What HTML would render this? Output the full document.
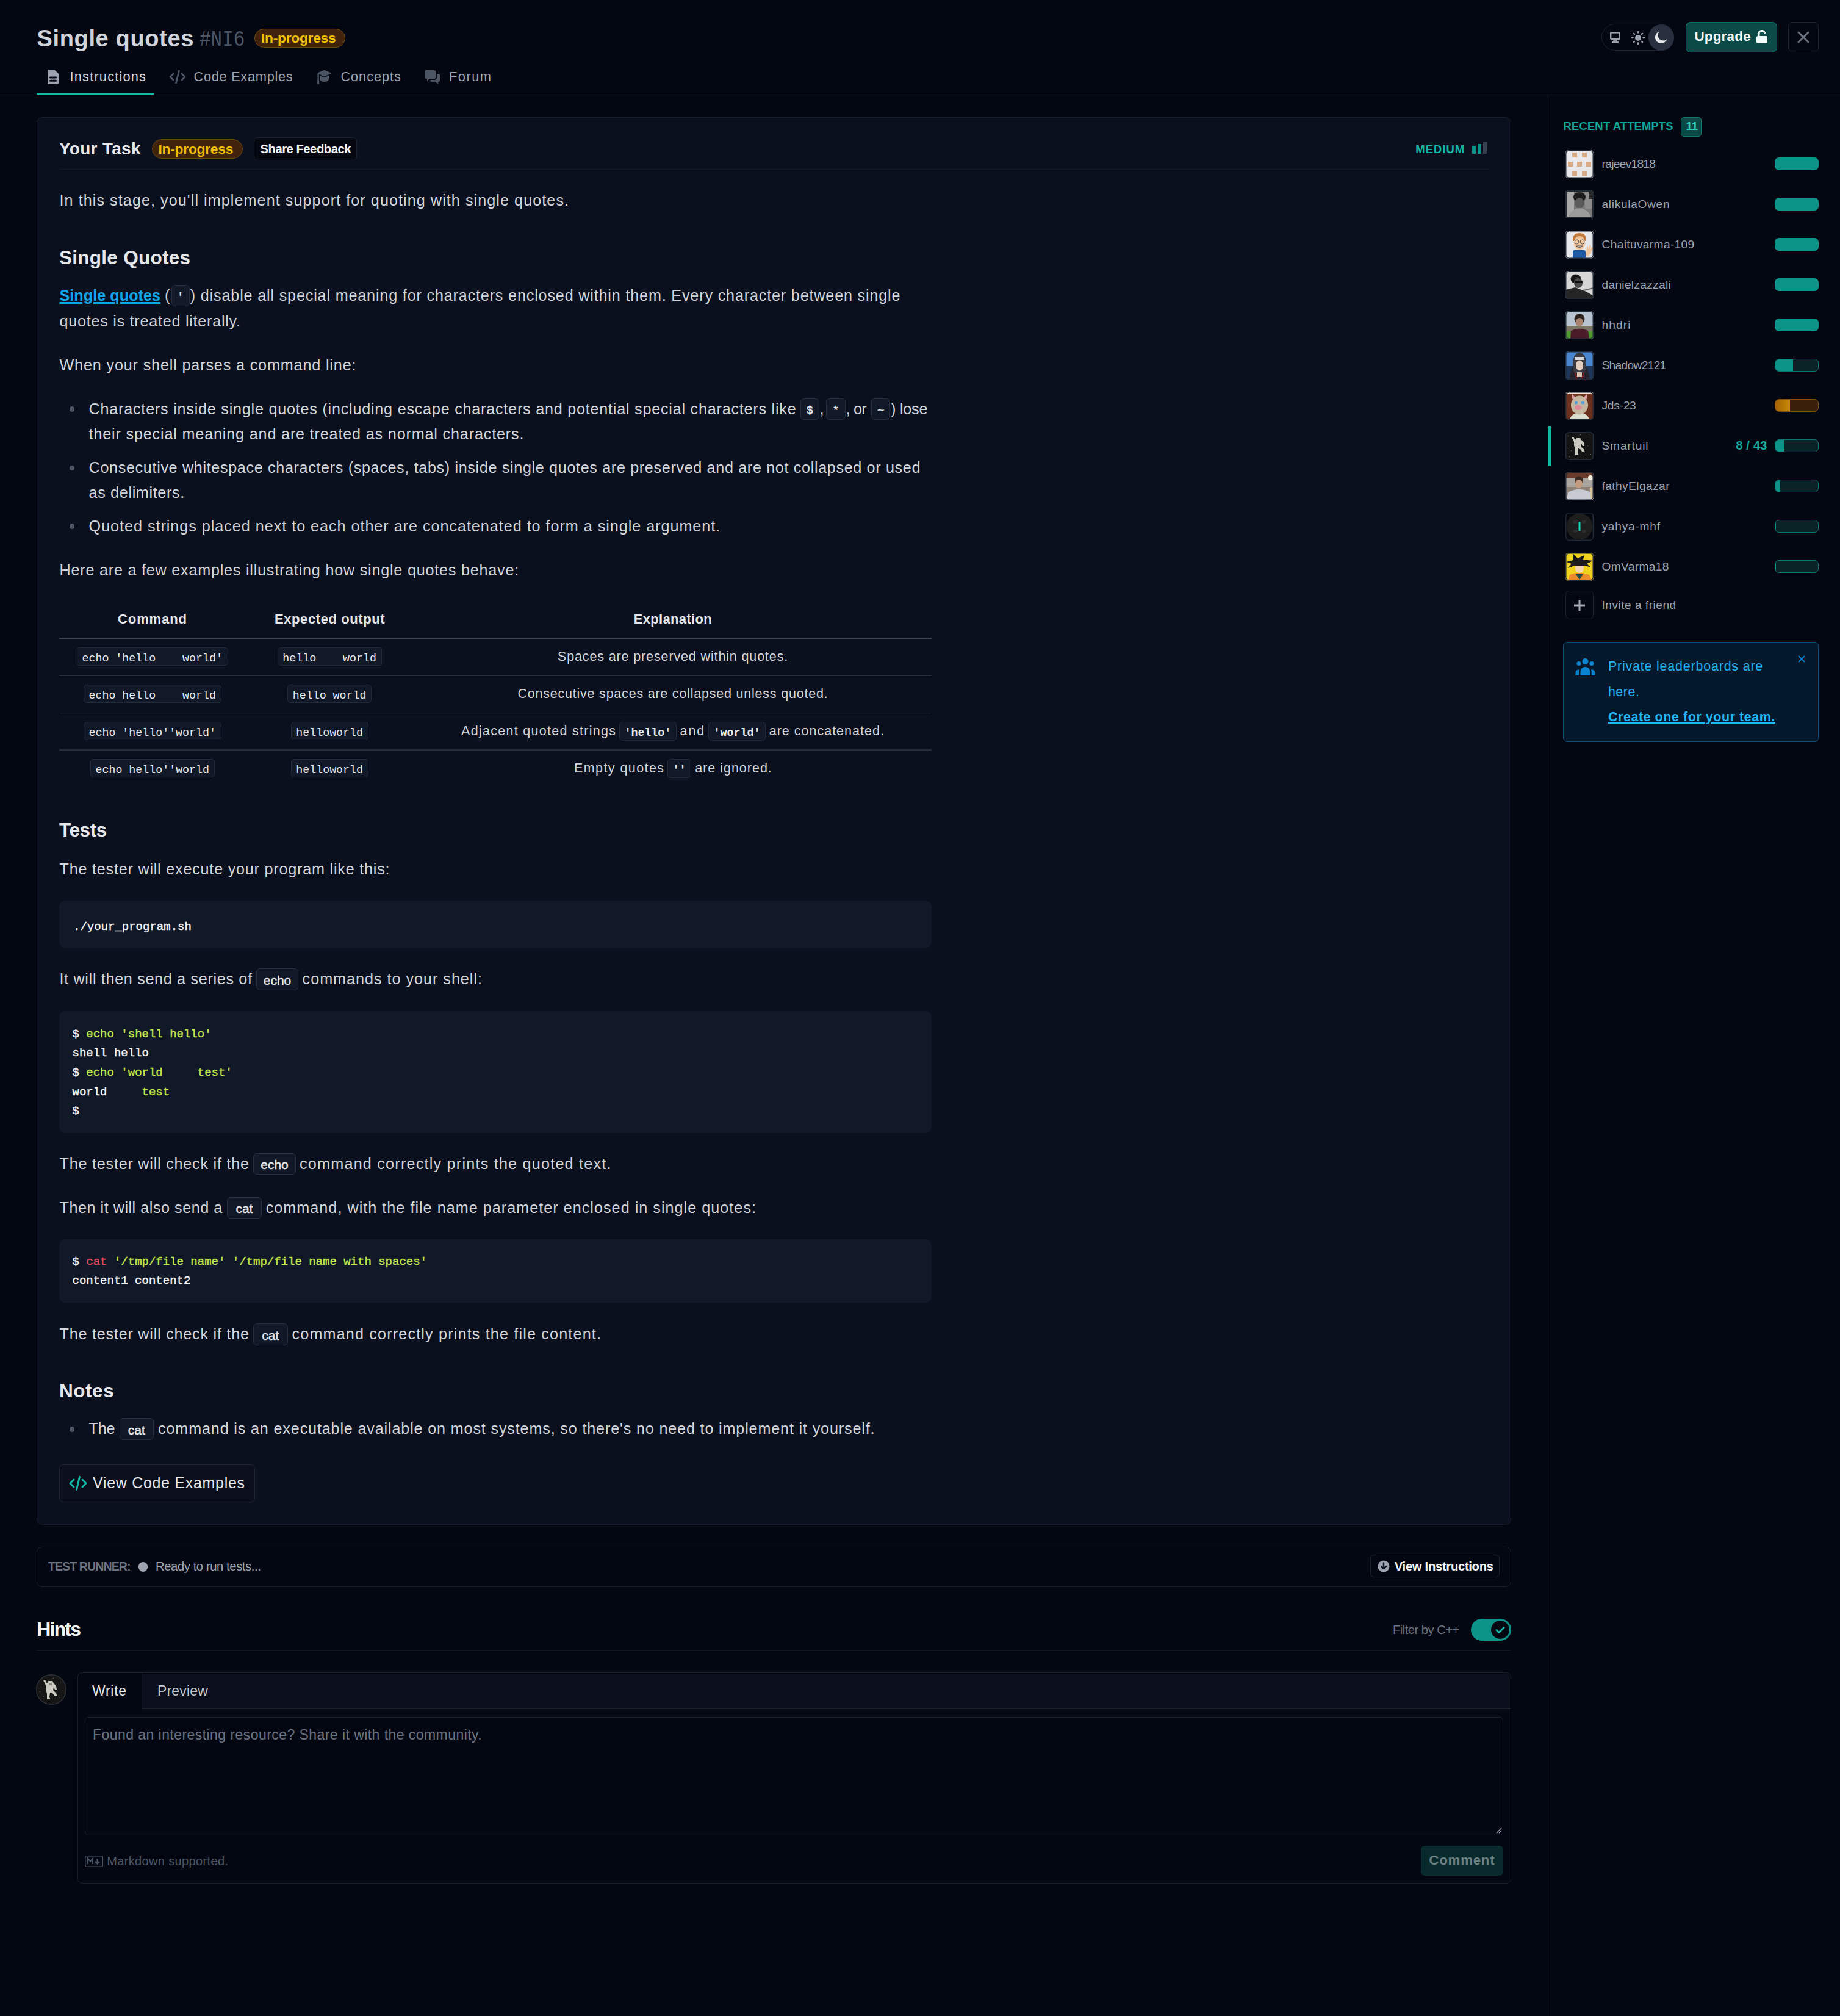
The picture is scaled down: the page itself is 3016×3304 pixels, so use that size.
<!DOCTYPE html>
<html><head><meta charset="utf-8"><title>Single quotes</title>
<style>
html,body{margin:0;padding:0;background:#030712;}
#pg{position:relative;width:3016px;height:3304px;overflow:hidden;background:#030712;font-family:"Liberation Sans", sans-serif;}
@media (max-width:1700px){#pg{zoom:0.5;}}
.t{position:absolute;white-space:pre;line-height:1;}
.s{font-family:"Liberation Sans", sans-serif;}
.m{font-family:"Liberation Mono", monospace;}
.cb{-webkit-text-stroke:0.45px currentColor;}
.b{position:absolute;box-sizing:border-box;}
.ic{font-family:"Liberation Sans", sans-serif;font-weight:700;font-size:20.5px;letter-spacing:0;color:#e5e7eb;background:#111827;border:1.5px solid #262e3b;border-radius:6px;padding:6px 9px 5px;}
.lk{color:#0ea5e9;font-weight:700;text-decoration:underline;text-decoration-thickness:2.6px;text-underline-offset:2px;}
</style></head><body><div id="pg">
<div id="title" class="t s" style="left:60.5px;top:43.8px;font-size:38px;color:#d1d5db;font-weight:700;letter-spacing:0.646px;">Single quotes</div>
<div class="t m" style="left:326.5px;top:48.4px;font-size:36px;color:#4b5563;transform:scaleX(0.86);transform-origin:0 0;">#NI6</div>
<div class="b" style="left:416.8px;top:46.8px;width:149.7px;height:31.6px;border-radius:17px;background:#40230a;border:1.5px solid #6e4a10;"></div>
<div id="hbadge" class="t s" style="left:428.0px;top:51.3px;font-size:22.8px;color:#f0c000;font-weight:700;letter-spacing:-0.272px;">In-progress</div>
<div class="b" style="left:59.8px;top:151.5px;width:192.2px;height:4.0px;background:#14b8a6;"></div>
<div id="tab1" class="t s" style="left:114.6px;top:114.7px;font-size:21.8px;color:#d1d5db;font-weight:400;letter-spacing:1.176px;">Instructions</div>
<div id="tab2" class="t s" style="left:317.5px;top:114.7px;font-size:21.8px;color:#9ca3af;font-weight:400;letter-spacing:0.694px;">Code Examples</div>
<div id="tab3" class="t s" style="left:558.4px;top:114.7px;font-size:21.8px;color:#9ca3af;font-weight:400;letter-spacing:0.931px;">Concepts</div>
<div id="tab4" class="t s" style="left:735.9px;top:114.7px;font-size:21.8px;color:#9ca3af;font-weight:400;letter-spacing:1.531px;">Forum</div>
<svg class="b" style="left:78px;top:114px" width="18" height="24" viewBox="0 0 18 24"><path d="M2.5 0h8.5l7 7v14.5a2.5 2.5 0 0 1-2.5 2.5h-13A2.5 2.5 0 0 1 0 21.5v-19A2.5 2.5 0 0 1 2.5 0z" fill="#9ca3af"/><rect x="3" y="11.5" width="12" height="3" rx="1.5" fill="#030712"/><rect x="3" y="16.8" width="12" height="3" rx="1.5" fill="#030712"/></svg>
<svg class="b" style="left:277px;top:114px" width="28" height="24" viewBox="0 0 28 24"><path d="M7 7l-5 5 5 5M21 7l5 5-5 5" stroke="#4b5563" stroke-width="2.8" fill="none" stroke-linecap="round" stroke-linejoin="round"/><path d="M16.5 2l-5 20" stroke="#4b5563" stroke-width="2.8" stroke-linecap="round"/></svg>
<svg class="b" style="left:518.5px;top:113.5px" width="25" height="25" viewBox="0 0 25 25"><path d="M12.5 0.5L0.5 6 12.5 11.5 24.5 6z" fill="#4b5563"/><path d="M5 9.5v6c0 2.6 3.4 4.6 7.5 4.6s7.5-2 7.5-4.6v-6l-7.5 3.5z" fill="#4b5563"/><path d="M2.6 7v11" stroke="#4b5563" stroke-width="2.4"/><rect x="1.2" y="17" width="3" height="7" rx="1" fill="#4b5563"/></svg>
<svg class="b" style="left:696px;top:114.5px" width="25" height="24" viewBox="0 0 25 24"><path d="M0 2.5A2.5 2.5 0 0 1 2.5 0h13A2.5 2.5 0 0 1 18 2.5v9a2.5 2.5 0 0 1-2.5 2.5H8l-4 4v-4H2.5A2.5 2.5 0 0 1 0 11.5z" fill="#4b5563"/><path d="M20 6h2.5A2.5 2.5 0 0 1 25 8.5v8a2.5 2.5 0 0 1-2.5 2.5H22v4l-4-4h-6a2.5 2.5 0 0 1-2.5-2.5V16h6.5a4 4 0 0 0 4-4z" fill="#4b5563"/></svg>
<div class="b" style="left:0.0px;top:154.5px;width:3016.0px;height:1.5px;background:#0f1520;"></div>
<div class="b" style="left:2625.3px;top:39.0px;width:118.2px;height:43.7px;border-radius:22px;border:1.5px solid #1a2130;background:#030712;"></div>
<div class="b" style="left:2701.6px;top:39.5px;width:42.6px;height:43.0px;border-radius:50%;background:#283040;"></div>
<svg class="b" style="left:2638.5px;top:52px" width="17" height="19" viewBox="0 0 17 19"><rect x="0" y="0" width="17" height="13" rx="2" fill="#9ca3af"/><rect x="2.4" y="2.6" width="12.2" height="7.6" fill="#030712"/><rect x="5.5" y="13" width="6" height="3" fill="#9ca3af"/><rect x="3" y="16" width="11" height="3" rx="1.2" fill="#9ca3af"/></svg>
<svg class="b" style="left:2674px;top:51px" width="22" height="22" viewBox="0 0 22 22"><circle cx="11" cy="11" r="5" fill="#9ca3af"/><g stroke="#9ca3af" stroke-width="2.4" stroke-linecap="round"><path d="M11 1v1.5M11 19.5V21M1 11h1.5M19.5 11H21M3.9 3.9l1 1M17.1 17.1l1 1M3.9 18.1l1-1M17.1 4.9l1-1"/></g></svg>
<svg class="b" style="left:2711px;top:50px" width="23" height="23" viewBox="0 0 23 23"><path d="M9 1.5A10 10 0 1 0 21.5 14 8 8 0 0 1 9 1.5z" fill="#e5e7eb"/></svg>
<div class="b" style="left:2763.0px;top:35.9px;width:149.7px;height:49.8px;border-radius:8px;background:#0b4a46;border:1.5px solid #0f766e;"></div>
<div id="upg" class="t s" style="left:2777.4px;top:49.3px;font-size:22.4px;color:#f9fafb;font-weight:700;letter-spacing:0.228px;">Upgrade</div>
<svg class="b" style="left:2878px;top:49px" width="20" height="23" viewBox="0 0 20 23"><path d="M5 10V6.5a5 5 0 0 1 9.6-2" stroke="#f0fdfa" stroke-width="3" fill="none" stroke-linecap="round"/><rect x="1" y="10" width="18" height="12" rx="2.5" fill="#f0fdfa"/></svg>
<div class="b" style="left:2931.1px;top:35.9px;width:49.8px;height:49.8px;border-radius:8px;border:1.5px solid #1a2130;"></div>
<svg class="b" style="left:2945px;top:50px" width="22" height="22" viewBox="0 0 22 22"><path d="M3 3l16 16M19 3L3 19" stroke="#6b7280" stroke-width="3" stroke-linecap="round"/></svg>
<div class="b" style="left:2536.8px;top:156.0px;width:1.4px;height:3148.0px;background:#0f1520;"></div>
<div id="ra" class="t s" style="left:2562.6px;top:198.3px;font-size:18.5px;color:#14a89a;font-weight:700;letter-spacing:0.083px;">RECENT ATTEMPTS</div>
<div class="b" style="left:2755.0px;top:192.3px;width:34.0px;height:31.3px;border-radius:5px;background:#0b4744;border:1.5px solid #0f766e;"></div>
<div id="ra11" class="t s" style="left:2763.5px;top:198.3px;font-size:18.5px;color:#2dd4bf;font-weight:700;letter-spacing:0.000px;">11</div>
<svg class="b" style="left:2566px;top:246px" width="46" height="46" viewBox="0 0 46 46"><defs><clipPath id="av0"><rect width="46" height="46" rx="5"/></clipPath></defs><g clip-path="url(#av0)"><rect width="46" height="46" fill="#e8e8ea"/><rect x="11" y="4" width="8" height="8" fill="#d8aa86"/><rect x="27" y="4" width="8" height="8" fill="#d8aa86"/><rect x="4" y="19" width="8" height="8" fill="#d8aa86"/><rect x="19" y="19" width="8" height="8" fill="#d8aa86"/><rect x="34" y="19" width="8" height="8" fill="#d8aa86"/><rect x="11" y="34" width="8" height="8" fill="#d8aa86"/><rect x="27" y="34" width="8" height="8" fill="#d8aa86"/></g><rect x="0.75" y="0.75" width="44.5" height="44.5" rx="5" fill="none" stroke="#1f2937" stroke-width="1.5"/></svg>
<div id="nm0" class="t s" style="left:2625.5px;top:258.7px;font-size:19.2px;color:#9ca3af;font-weight:400;letter-spacing:-0.716px;">rajeev1818</div>
<div class="b" style="left:2909.0px;top:258.0px;width:72.0px;height:21.0px;border-radius:7px;background:#0d9488;"></div>
<svg class="b" style="left:2566px;top:312px" width="46" height="46" viewBox="0 0 46 46"><defs><clipPath id="av1"><rect width="46" height="46" rx="5"/></clipPath></defs><g clip-path="url(#av1)"><rect width="46" height="46" fill="#7a7a7a"/><rect width="14" height="46" fill="#a8a8a8"/><rect x="32" width="14" height="30" fill="#8c8c8c"/><rect x="38" width="8" height="14" fill="#2a2a2a"/><ellipse cx="23" cy="11" rx="10" ry="8" fill="#1c1c1c"/><ellipse cx="23" cy="21" rx="7.5" ry="9" fill="#5a5a5a"/><path d="M5 46 Q7 31 23 29 Q39 31 42 46z" fill="#9c9c9c"/><rect x="1" y="1" width="44" height="44" fill="none" stroke="#2a2a2a" stroke-width="2"/></g><rect x="0.75" y="0.75" width="44.5" height="44.5" rx="5" fill="none" stroke="#1f2937" stroke-width="1.5"/></svg>
<div id="nm1" class="t s" style="left:2625.5px;top:324.7px;font-size:19.2px;color:#9ca3af;font-weight:400;letter-spacing:0.657px;">alikulaOwen</div>
<div class="b" style="left:2909.0px;top:324.0px;width:72.0px;height:21.0px;border-radius:7px;background:#0d9488;"></div>
<svg class="b" style="left:2566px;top:378px" width="46" height="46" viewBox="0 0 46 46"><defs><clipPath id="av2"><rect width="46" height="46" rx="5"/></clipPath></defs><g clip-path="url(#av2)"><rect width="46" height="46" fill="#e6e7ea"/><path d="M12 15 Q12 4 23 4 Q34 4 34 15 L34 17 L12 17z" fill="#c17a3c"/><ellipse cx="23" cy="20" rx="9.5" ry="11" fill="#efc39b"/><circle cx="18.5" cy="18.5" r="3.5" fill="none" stroke="#555" stroke-width="1"/><circle cx="27.5" cy="18.5" r="3.5" fill="none" stroke="#555" stroke-width="1"/><path d="M18 25 Q23 30 28 25z" fill="#fff" stroke="#333" stroke-width="0.8"/><rect x="12" y="32" width="21" height="14" rx="3" fill="#1f5aa6"/><path d="M34 40 L35 26 L37 25 L38 31 L40 23 L42 24 L41 30 L44 26 L45 28 L41 38 L37 42z" fill="#efc39b"/></g><rect x="0.75" y="0.75" width="44.5" height="44.5" rx="5" fill="none" stroke="#1f2937" stroke-width="1.5"/></svg>
<div id="nm2" class="t s" style="left:2625.5px;top:390.7px;font-size:19.2px;color:#9ca3af;font-weight:400;letter-spacing:0.329px;">Chaituvarma-109</div>
<div class="b" style="left:2909.0px;top:390.0px;width:72.0px;height:21.0px;border-radius:7px;background:#0d9488;"></div>
<svg class="b" style="left:2566px;top:444px" width="46" height="46" viewBox="0 0 46 46"><defs><clipPath id="av3"><rect width="46" height="46" rx="5"/></clipPath></defs><g clip-path="url(#av3)"><rect width="46" height="46" fill="#d6d6d6"/><ellipse cx="17" cy="13" rx="8.5" ry="7.5" fill="#1a1a1a"/><ellipse cx="21" cy="20" rx="7" ry="8" fill="#4c4c4c"/><rect x="15" y="16" width="13" height="4" rx="1.5" fill="#0e0e0e"/><path d="M0 31 L16 27 L34 34 L46 41 L46 46 L0 46z" fill="#252525"/><path d="M29 31 L46 27 L46 29 L31 33z" fill="#707070"/></g><rect x="0.75" y="0.75" width="44.5" height="44.5" rx="5" fill="none" stroke="#1f2937" stroke-width="1.5"/></svg>
<div id="nm3" class="t s" style="left:2625.5px;top:456.7px;font-size:19.2px;color:#9ca3af;font-weight:400;letter-spacing:0.277px;">danielzazzali</div>
<div class="b" style="left:2909.0px;top:456.0px;width:72.0px;height:21.0px;border-radius:7px;background:#0d9488;"></div>
<svg class="b" style="left:2566px;top:510px" width="46" height="46" viewBox="0 0 46 46"><defs><clipPath id="av4"><rect width="46" height="46" rx="5"/></clipPath></defs><g clip-path="url(#av4)"><rect width="46" height="46" fill="#b8c5d1"/><rect y="24" width="46" height="10" fill="#7b7663"/><rect y="33" width="46" height="13" fill="#4d9a2e"/><ellipse cx="23" cy="13" rx="8.5" ry="9" fill="#2a2320"/><ellipse cx="23" cy="18" rx="6" ry="7" fill="#a98570"/><path d="M8 46 L9 32 Q23 25 37 32 L39 46z" fill="#4a1c2a"/></g><rect x="0.75" y="0.75" width="44.5" height="44.5" rx="5" fill="none" stroke="#1f2937" stroke-width="1.5"/></svg>
<div id="nm4" class="t s" style="left:2625.5px;top:522.7px;font-size:19.2px;color:#9ca3af;font-weight:400;letter-spacing:1.106px;">hhdri</div>
<div class="b" style="left:2909.0px;top:522.0px;width:72.0px;height:21.0px;border-radius:7px;background:#0d9488;"></div>
<svg class="b" style="left:2566px;top:576px" width="46" height="46" viewBox="0 0 46 46"><defs><clipPath id="av5"><rect width="46" height="46" rx="5"/></clipPath></defs><g clip-path="url(#av5)"><rect width="46" height="46" fill="#4a86d0"/><rect y="24" width="46" height="22" fill="#1e3659"/><path d="M6 46 L10 27 L23 22 L36 27 L40 46z" fill="#25252f"/><path d="M14 28 L19 46 M32 28 L27 46" stroke="#8c1f26" stroke-width="2.2"/><path d="M12 27 Q11 2 23 2 Q35 2 34 27 L31 35 L15 35z" fill="#3a3a42"/><ellipse cx="23" cy="23" rx="6" ry="8.5" fill="#e2cfc0"/><rect x="15" y="9" width="16" height="5" fill="#d4d4d8"/><rect x="19" y="34" width="8" height="8" fill="#d9c3b0"/></g><rect x="0.75" y="0.75" width="44.5" height="44.5" rx="5" fill="none" stroke="#1f2937" stroke-width="1.5"/></svg>
<div id="nm5" class="t s" style="left:2625.5px;top:588.7px;font-size:19.2px;color:#9ca3af;font-weight:400;letter-spacing:-0.693px;">Shadow2121</div>
<div class="b" style="left:2909.0px;top:588.0px;width:72.0px;height:21.0px;border-radius:7px;background:#092427;border:1.5px solid #0f766e;overflow:hidden;"><div style="position:absolute;left:0;top:0;bottom:0;width:42.0%;background:#0d9488;"></div></div>
<svg class="b" style="left:2566px;top:642px" width="46" height="46" viewBox="0 0 46 46"><defs><clipPath id="av6"><rect width="46" height="46" rx="5"/></clipPath></defs><g clip-path="url(#av6)"><rect width="46" height="46" fill="#6b301b"/><rect width="46" height="3" fill="#e8e2d8"/><path d="M7 46 Q9 35 23 35 Q37 35 39 46z" fill="#d8dbcc"/><ellipse cx="23" cy="22" rx="14" ry="15.5" fill="#c6b7a1"/><path d="M11 4 L17 10 L11 12z" fill="#e0a6b0"/><path d="M35 4 L29 10 L35 12z" fill="#e0a6b0"/><circle cx="17.5" cy="18" r="2.6" fill="#5aa0d8"/><circle cx="28.5" cy="18" r="2.6" fill="#5aa0d8"/><ellipse cx="21" cy="26" rx="6" ry="4" fill="#df8999"/></g><rect x="0.75" y="0.75" width="44.5" height="44.5" rx="5" fill="none" stroke="#1f2937" stroke-width="1.5"/></svg>
<div id="nm6" class="t s" style="left:2625.5px;top:654.7px;font-size:19.2px;color:#9ca3af;font-weight:400;letter-spacing:-0.279px;">Jds-23</div>
<div class="b" style="left:2909.0px;top:654.0px;width:72.0px;height:21.0px;border-radius:7px;background:#3a200b;border:1.5px solid #854d0e;overflow:hidden;"><div style="position:absolute;left:0;top:0;bottom:0;width:34.0%;background:linear-gradient(90deg,#a16207,#ca8a04);"></div></div>
<svg class="b" style="left:2566px;top:708px" width="46" height="46" viewBox="0 0 46 46"><defs><clipPath id="av7"><rect width="46" height="46" rx="5"/></clipPath></defs><g clip-path="url(#av7)"><rect width="46" height="46" fill="#141414"/><rect x="4" y="6" width="1" height="1" fill="#777"/><rect x="9" y="30" width="1" height="1" fill="#777"/><rect x="38" y="8" width="1" height="1" fill="#777"/><rect x="41" y="36" width="1" height="1" fill="#777"/><rect x="6" y="40" width="1" height="1" fill="#777"/><rect x="33" y="42" width="1" height="1" fill="#777"/><rect x="14" y="20" width="1" height="1" fill="#777"/><rect x="36" y="22" width="1" height="1" fill="#777"/><rect x="24" y="4" width="1" height="1" fill="#777"/><rect x="2" y="24" width="1" height="1" fill="#777"/><path d="M10 9 L13 8 L16 13 L18 10 L24 10 L26 13 L30 17 L31 23 L28 23 L26 19 L25 24 L30 28 L32 33 L28 33 L24 28 L21 27 L20 35 L22 38 L16 38 L16 29 L14 22 L14 16z" fill="#c9c9bf"/></g><rect x="0.75" y="0.75" width="44.5" height="44.5" rx="5" fill="none" stroke="#1f2937" stroke-width="1.5"/></svg>
<div id="nm7" class="t s" style="left:2625.5px;top:720.7px;font-size:19.2px;color:#9ca3af;font-weight:400;letter-spacing:0.804px;">Smartuil</div>
<div class="b" style="left:2909.0px;top:720.0px;width:72.0px;height:21.0px;border-radius:7px;background:#092427;border:1.5px solid #0f766e;overflow:hidden;"><div style="position:absolute;left:0;top:0;bottom:0;width:19.5%;background:#0d9488;"></div></div>
<svg class="b" style="left:2566px;top:774px" width="46" height="46" viewBox="0 0 46 46"><defs><clipPath id="av8"><rect width="46" height="46" rx="5"/></clipPath></defs><g clip-path="url(#av8)"><rect width="46" height="46" fill="#8d8178"/><rect width="46" height="10" fill="#6a3c2c"/><rect y="10" width="46" height="14" fill="#aaa69f"/><circle cx="41" cy="9" r="4" fill="#f3eee0"/><ellipse cx="22" cy="14" rx="7" ry="7.5" fill="#3b2a22"/><ellipse cx="22" cy="19" rx="6" ry="7" fill="#c29a7f"/><path d="M2 46 L4 33 Q22 23 42 33 L44 46z" fill="#c9cbd2"/><path d="M40 25 Q46 22 46 30 L46 46 L42 46z" fill="#d9c5a0"/></g><rect x="0.75" y="0.75" width="44.5" height="44.5" rx="5" fill="none" stroke="#1f2937" stroke-width="1.5"/></svg>
<div id="nm8" class="t s" style="left:2625.5px;top:786.7px;font-size:19.2px;color:#9ca3af;font-weight:400;letter-spacing:0.403px;">fathyElgazar</div>
<div class="b" style="left:2909.0px;top:786.0px;width:72.0px;height:21.0px;border-radius:7px;background:#092427;border:1.5px solid #0f766e;overflow:hidden;"><div style="position:absolute;left:0;top:0;bottom:0;width:11.0%;background:#0d9488;"></div></div>
<svg class="b" style="left:2566px;top:840px" width="46" height="46" viewBox="0 0 46 46"><defs><clipPath id="av9"><rect width="46" height="46" rx="5"/></clipPath></defs><g clip-path="url(#av9)"><rect width="46" height="46" fill="#04070d"/><circle cx="23" cy="23" r="21.5" fill="#1e1e1e"/><rect x="13" y="13" width="6" height="5" fill="#2c2c2c"/><rect x="27" y="13" width="6" height="5" fill="#2c2c2c"/><rect x="13" y="28" width="6" height="5" fill="#2c2c2c"/><rect x="27" y="28" width="6" height="5" fill="#2c2c2c"/><rect x="21.5" y="15" width="3" height="15" fill="#14d9b5"/></g><rect x="0.75" y="0.75" width="44.5" height="44.5" rx="5" fill="none" stroke="#1f2937" stroke-width="1.5"/></svg>
<div id="nm9" class="t s" style="left:2625.5px;top:852.7px;font-size:19.2px;color:#9ca3af;font-weight:400;letter-spacing:0.740px;">yahya-mhf</div>
<div class="b" style="left:2909.0px;top:852.0px;width:72.0px;height:21.0px;border-radius:7px;background:#092427;border:1.5px solid #0f766e;overflow:hidden;"><div style="position:absolute;left:0;top:0;bottom:0;width:2.0%;background:#0d9488;"></div></div>
<svg class="b" style="left:2566px;top:906px" width="46" height="46" viewBox="0 0 46 46"><defs><clipPath id="av10"><rect width="46" height="46" rx="5"/></clipPath></defs><g clip-path="url(#av10)"><rect width="46" height="46" fill="#f0d31d"/><path d="M4 46 L7 36 Q23 29 39 36 L44 46z" fill="#e98a28"/><path d="M17 35 L23 44 L29 35z" fill="#1f4d4a"/><ellipse cx="23" cy="25" rx="7" ry="8" fill="#f3d4b4"/><path d="M1 15 L12 12 L12 1 L20 9 L31 4 L29 11 L45 13 L35 18 L42 24 L32 21 L15 21 L4 25 L10 18z" fill="#1c1c1c"/></g><rect x="0.75" y="0.75" width="44.5" height="44.5" rx="5" fill="none" stroke="#1f2937" stroke-width="1.5"/></svg>
<div id="nm10" class="t s" style="left:2625.5px;top:918.7px;font-size:19.2px;color:#9ca3af;font-weight:400;letter-spacing:0.332px;">OmVarma18</div>
<div class="b" style="left:2909.0px;top:918.0px;width:72.0px;height:21.0px;border-radius:7px;background:#092427;border:1.5px solid #0f766e;overflow:hidden;"><div style="position:absolute;left:0;top:0;bottom:0;width:2.0%;background:#0d9488;"></div></div>
<div id="s8" class="t s" style="left:2845.3px;top:720.0px;font-size:20.5px;color:#14a89a;font-weight:700;letter-spacing:-0.021px;">8 / 43</div>
<div class="b" style="left:2537.5px;top:698.0px;width:4.0px;height:66.0px;background:#14b8a6;"></div>
<div class="b" style="left:2566.0px;top:968.3px;width:46.0px;height:47.2px;border-radius:6px;border:1.5px solid #1a2130;background:#030712;"></div>
<svg class="b" style="left:2580px;top:983px" width="18" height="18" viewBox="0 0 18 18"><path d="M9 1v16M1 9h16" stroke="#a8adb7" stroke-width="3" stroke-linecap="round"/></svg>
<div id="inv" class="t s" style="left:2625.5px;top:981.7px;font-size:19.2px;color:#9ca3af;font-weight:400;letter-spacing:0.464px;">Invite a friend</div>
<div class="b" style="left:2562.3px;top:1052.4px;width:418.6px;height:163.9px;border-radius:7px;background:#04182b;border:1.5px solid #0b4f7e;"></div>
<svg class="b" style="left:2582px;top:1079px" width="33" height="28" viewBox="0 0 33 28"><circle cx="16.5" cy="5" r="5" fill="#0b84cf"/><circle cx="6" cy="8.5" r="3.6" fill="#0b84cf"/><circle cx="27" cy="8.5" r="3.6" fill="#0b84cf"/><path d="M8.5 28v-6a8 8 0 0 1 16 0v6z" fill="#0b84cf"/><path d="M0.5 28v-4.5a5 5 0 0 1 6.5-4.8 10 10 0 0 0-0.8 3.8V28z" fill="#0b84cf"/><path d="M32.5 28v-4.5a5 5 0 0 0-6.5-4.8 10 10 0 0 1 0.8 3.8V28z" fill="#0b84cf"/></svg>
<div id="n1" class="t s" style="left:2635.9px;top:1081.8px;font-size:21.5px;color:#20b0f2;font-weight:400;letter-spacing:0.781px;">Private leaderboards are</div>
<div id="n2" class="t s" style="left:2635.9px;top:1123.6px;font-size:21.5px;color:#20b0f2;font-weight:400;letter-spacing:0.523px;">here.</div>
<div id="n3" class="t s" style="left:2635.9px;top:1165.2px;font-size:21.5px;color:#20b8f8;font-weight:700;letter-spacing:0.547px;text-decoration:underline;text-decoration-thickness:2.2px;text-underline-offset:2px;">Create one for your team.</div>
<svg class="b" style="left:2947px;top:1074px" width="12" height="12" viewBox="0 0 12 12"><path d="M1 1l10 10M11 1L1 11" stroke="#0b84cf" stroke-width="2"/></svg>
<div class="b" style="left:60.0px;top:192.0px;width:2417.0px;height:2307.0px;border-radius:9px;background:#0a101d;border:1.5px solid #171d2a;"></div>
<div id="yt" class="t s" style="left:97.0px;top:229.6px;font-size:27.9px;color:#e5e7eb;font-weight:700;letter-spacing:0.335px;">Your Task</div>
<div class="b" style="left:249.0px;top:227.8px;width:149.0px;height:32.2px;border-radius:17px;background:#40230a;border:1.5px solid #6e4a10;"></div>
<div id="cbadge" class="t s" style="left:259.5px;top:232.7px;font-size:22.8px;color:#f0c000;font-weight:700;letter-spacing:-0.252px;">In-progress</div>
<div class="b" style="left:416.3px;top:225.0px;width:168.7px;height:37.6px;border-radius:6px;background:#04070f;border:1.5px solid #1a2130;"></div>
<div id="sf" class="t s" style="left:426.5px;top:233.8px;font-size:20.3px;color:#f3f4f6;font-weight:700;letter-spacing:-0.506px;">Share Feedback</div>
<div id="med" class="t s" style="left:2320.3px;top:236.0px;font-size:18.5px;color:#14b8a6;font-weight:700;letter-spacing:0.976px;">MEDIUM</div>
<div class="b" style="left:2413.1px;top:239.0px;width:5.7px;height:12.7px;background:#0d9488;border-radius:1px;"></div>
<div class="b" style="left:2422.0px;top:236.3px;width:6.0px;height:15.4px;background:#0d9488;border-radius:1px;"></div>
<div class="b" style="left:2431.2px;top:232.2px;width:5.8px;height:19.5px;background:#374151;border-radius:1px;"></div>
<div class="b" style="left:97.0px;top:276.5px;width:2343.0px;height:1.5px;background:#161c28;"></div>
<div id="p1" class="t s" style="left:97.5px;top:315.7px;font-size:25.2px;color:#d1d5db;font-weight:400;letter-spacing:1.053px;">In this stage, you'll implement support for quoting with single quotes.</div>
<div id="h1" class="t s" style="left:97.0px;top:406.7px;font-size:31.5px;color:#e5e7eb;font-weight:700;letter-spacing:0.269px;">Single Quotes</div>
<div id="p2a" class="t s" style="left:97.5px;top:471.7px;font-size:25.2px;color:#d1d5db;font-weight:400;letter-spacing:0.034px;"><span class="lk">Single quotes</span> (</div>
<div class="b" style="left:280.6px;top:466.7px;width:30.4px;height:35.8px;border-radius:6px;background:#111827;border:1.5px solid #262e3b;"></div><div class="t m cb" style="left:280.6px;width:30.4px;text-align:center;top:478.4px;font-size:19px;color:#e5e7eb;font-weight:400;">'</div>
<div id="p2c" class="t s" style="left:311.8px;top:471.7px;font-size:25.2px;color:#d1d5db;font-weight:400;letter-spacing:0.820px;">) disable all special meaning for characters enclosed within them. Every character between single</div>
<div id="p2b" class="t s" style="left:97.5px;top:513.9px;font-size:25.2px;color:#d1d5db;font-weight:400;letter-spacing:0.732px;">quotes is treated literally.</div>
<div id="p3" class="t s" style="left:97.5px;top:585.8px;font-size:25.2px;color:#d1d5db;font-weight:400;letter-spacing:0.838px;">When your shell parses a command line:</div>
<div class="b" style="left:113.8px;top:666.3px;width:8.4px;height:8.4px;border-radius:50%;background:#4b5563;"></div>
<div class="b" style="left:113.8px;top:762.6px;width:8.4px;height:8.4px;border-radius:50%;background:#4b5563;"></div>
<div class="b" style="left:113.8px;top:858.4px;width:8.4px;height:8.4px;border-radius:50%;background:#4b5563;"></div>
<div id="li1a" class="t s" style="left:145.6px;top:657.5px;font-size:25.2px;color:#d1d5db;font-weight:400;letter-spacing:0.763px;">Characters inside single quotes (including escape characters and potential special characters like</div>
<div class="b" style="left:1312.0px;top:652.5px;width:30.5px;height:35.8px;border-radius:6px;background:#111827;border:1.5px solid #262e3b;"></div><div class="t m cb" style="left:1312.0px;width:30.5px;text-align:center;top:664.2px;font-size:19px;color:#e5e7eb;font-weight:400;">$</div>
<div id="li1c" class="t s" style="left:1343.4px;top:657.5px;font-size:25.2px;color:#d1d5db;font-weight:400;letter-spacing:0.000px;">,</div>
<div class="b" style="left:1354.4px;top:652.5px;width:31.2px;height:35.8px;border-radius:6px;background:#111827;border:1.5px solid #262e3b;"></div><div class="t m cb" style="left:1354.4px;width:31.2px;text-align:center;top:664.2px;font-size:19px;color:#e5e7eb;font-weight:400;">*</div>
<div id="li1d" class="t s" style="left:1386.5px;top:657.5px;font-size:25.2px;color:#d1d5db;font-weight:400;letter-spacing:-0.731px;">, or</div>
<div class="b" style="left:1428.2px;top:652.5px;width:31.2px;height:35.8px;border-radius:6px;background:#111827;border:1.5px solid #262e3b;"></div><div class="t m cb" style="left:1428.2px;width:31.2px;text-align:center;top:664.2px;font-size:19px;color:#e5e7eb;font-weight:400;">~</div>
<div id="li1e" class="t s" style="left:1460.0px;top:657.5px;font-size:25.2px;color:#d1d5db;font-weight:400;letter-spacing:0.000px;">)</div>
<div id="li1f" class="t s" style="left:1474.9px;top:657.5px;font-size:25.2px;color:#d1d5db;font-weight:400;letter-spacing:-0.237px;">lose</div>
<div id="li1b" class="t s" style="left:145.6px;top:699.2px;font-size:25.2px;color:#d1d5db;font-weight:400;letter-spacing:0.824px;">their special meaning and are treated as normal characters.</div>
<div id="li2a" class="t s" style="left:145.6px;top:754.4px;font-size:25.2px;color:#d1d5db;font-weight:400;letter-spacing:0.643px;">Consecutive whitespace characters (spaces, tabs) inside single quotes are preserved and are not collapsed or used</div>
<div id="li2b" class="t s" style="left:145.6px;top:795.4px;font-size:25.2px;color:#d1d5db;font-weight:400;letter-spacing:0.639px;">as delimiters.</div>
<div id="li3" class="t s" style="left:145.6px;top:850.2px;font-size:25.2px;color:#d1d5db;font-weight:400;letter-spacing:0.961px;">Quoted strings placed next to each other are concatenated to form a single argument.</div>
<div id="p4" class="t s" style="left:97.5px;top:921.7px;font-size:25.2px;color:#d1d5db;font-weight:400;letter-spacing:0.771px;">Here are a few examples illustrating how single quotes behave:</div>
<div id="th1" class="t s" style="left:193.0px;top:1004.4px;font-size:22px;color:#e5e7eb;font-weight:700;letter-spacing:0.906px;">Command</div>
<div id="th2" class="t s" style="left:450.0px;top:1004.4px;font-size:22px;color:#e5e7eb;font-weight:700;letter-spacing:0.590px;">Expected output</div>
<div id="th3" class="t s" style="left:1038.8px;top:1004.4px;font-size:22px;color:#e5e7eb;font-weight:700;letter-spacing:0.321px;">Explanation</div>
<div class="b" style="left:97.0px;top:1045.2px;width:1430.0px;height:1.7px;background:#3a4250;"></div>
<div class="b" style="left:97.0px;top:1106.8px;width:1430.0px;height:1.5px;background:#262d3a;"></div>
<div class="b" style="left:97.0px;top:1167.8px;width:1430.0px;height:1.5px;background:#262d3a;"></div>
<div class="b" style="left:97.0px;top:1228.4px;width:1430.0px;height:1.5px;background:#262d3a;"></div>
<div class="b" style="left:126.0px;top:1061.2px;width:248.0px;height:30.3px;border-radius:5px;background:#111827;border:1.5px solid #222a38;"></div><div class="t m" style="left:134.5px;top:1070.2px;font-size:18.3px;color:#e5e7eb;white-space:pre;">echo 'hello    world'</div>
<div class="b" style="left:454.8px;top:1061.2px;width:171.0px;height:30.3px;border-radius:5px;background:#111827;border:1.5px solid #222a38;"></div><div class="t m" style="left:463.3px;top:1070.2px;font-size:18.3px;color:#e5e7eb;white-space:pre;">hello    world</div>
<div id="td0" class="t s" style="left:914.0px;top:1065.5px;font-size:21.5px;color:#d1d5db;font-weight:400;letter-spacing:0.867px;">Spaces are preserved within quotes.</div>
<div class="b" style="left:137.0px;top:1122.2px;width:226.0px;height:30.3px;border-radius:5px;background:#111827;border:1.5px solid #222a38;"></div><div class="t m" style="left:145.5px;top:1131.2px;font-size:18.3px;color:#e5e7eb;white-space:pre;">echo hello    world</div>
<div class="b" style="left:471.3px;top:1122.2px;width:138.0px;height:30.3px;border-radius:5px;background:#111827;border:1.5px solid #222a38;"></div><div class="t m" style="left:479.8px;top:1131.2px;font-size:18.3px;color:#e5e7eb;white-space:pre;">hello world</div>
<div id="td1" class="t s" style="left:848.4px;top:1126.5px;font-size:21.5px;color:#d1d5db;font-weight:400;letter-spacing:0.785px;">Consecutive spaces are collapsed unless quoted.</div>
<div class="b" style="left:137.0px;top:1183.2px;width:226.0px;height:30.3px;border-radius:5px;background:#111827;border:1.5px solid #222a38;"></div><div class="t m" style="left:145.5px;top:1192.2px;font-size:18.3px;color:#e5e7eb;white-space:pre;">echo 'hello''world'</div>
<div class="b" style="left:476.8px;top:1183.2px;width:127.0px;height:30.3px;border-radius:5px;background:#111827;border:1.5px solid #222a38;"></div><div class="t m" style="left:485.3px;top:1192.2px;font-size:18.3px;color:#e5e7eb;white-space:pre;">helloworld</div>
<div class="b" style="left:148.0px;top:1244.2px;width:204.0px;height:30.3px;border-radius:5px;background:#111827;border:1.5px solid #222a38;"></div><div class="t m" style="left:156.5px;top:1253.2px;font-size:18.3px;color:#e5e7eb;white-space:pre;">echo hello''world</div>
<div class="b" style="left:476.8px;top:1244.2px;width:127.0px;height:30.3px;border-radius:5px;background:#111827;border:1.5px solid #222a38;"></div><div class="t m" style="left:485.3px;top:1253.2px;font-size:18.3px;color:#e5e7eb;white-space:pre;">helloworld</div>
<div id="td2" class="t s" style="left:756.0px;top:1187.5px;font-size:21.5px;color:#d1d5db;font-weight:400;letter-spacing:1.285px;">Adjacent quoted strings</div>
<div class="b" style="left:1015.0px;top:1183.2px;width:93.7px;height:30.6px;border-radius:5px;background:#111827;border:1.5px solid #222a38;"></div><div class="t m" style="left:1015.0px;width:93.7px;text-align:center;top:1191.7px;font-size:18.3px;color:#e5e7eb;font-weight:700;">'hello'</div>
<div id="td2b" class="t s" style="left:1114.6px;top:1187.5px;font-size:21.5px;color:#d1d5db;font-weight:400;letter-spacing:1.906px;">and</div>
<div class="b" style="left:1161.2px;top:1183.2px;width:93.6px;height:30.6px;border-radius:5px;background:#111827;border:1.5px solid #222a38;"></div><div class="t m" style="left:1161.2px;width:93.6px;text-align:center;top:1191.7px;font-size:18.3px;color:#e5e7eb;font-weight:700;">'world'</div>
<div id="td2c" class="t s" style="left:1260.7px;top:1187.5px;font-size:21.5px;color:#d1d5db;font-weight:400;letter-spacing:1.004px;">are concatenated.</div>
<div id="td3" class="t s" style="left:941.0px;top:1248.5px;font-size:21.5px;color:#d1d5db;font-weight:400;letter-spacing:1.422px;">Empty quotes</div>
<div class="b" style="left:1094.0px;top:1244.2px;width:38.9px;height:30.6px;border-radius:5px;background:#111827;border:1.5px solid #222a38;"></div><div class="t m" style="left:1094.0px;width:38.9px;text-align:center;top:1252.7px;font-size:18.3px;color:#e5e7eb;font-weight:700;">''</div>
<div id="td3b" class="t s" style="left:1139.3px;top:1248.5px;font-size:21.5px;color:#d1d5db;font-weight:400;letter-spacing:0.977px;">are ignored.</div>
<div id="h2" class="t s" style="left:97.0px;top:1345.1px;font-size:31.5px;color:#e5e7eb;font-weight:700;letter-spacing:-0.413px;">Tests</div>
<div id="p5" class="t s" style="left:97.5px;top:1412.1px;font-size:25.2px;color:#d1d5db;font-weight:400;letter-spacing:0.775px;">The tester will execute your program like this:</div>
<div class="b" style="left:97.0px;top:1476.4px;width:1430.0px;height:78.0px;border-radius:10px;background:#111827;"></div>
<div id="c1" class="t m" style="left:120.0px;top:1510.1px;font-size:19px;color:#f3f4f6;font-weight:400;letter-spacing:0.000px;"><span class="cb">./your_program.sh</span></div>
<div id="p6" class="t s" style="left:97.5px;top:1592.3px;font-size:25.2px;color:#d1d5db;font-weight:400;letter-spacing:0.667px;">It will then send a series of</div>
<div class="b" style="left:420.2px;top:1587.3px;width:68.6px;height:35.8px;border-radius:6px;background:#111827;border:1.5px solid #262e3b;"></div><div class="t s cb" style="left:420.2px;width:68.6px;text-align:center;top:1595.8px;font-size:21px;color:#e5e7eb;font-weight:400;">echo</div>
<div id="p6b" class="t s" style="left:495.6px;top:1592.3px;font-size:25.2px;color:#d1d5db;font-weight:400;letter-spacing:0.973px;">commands to your shell:</div>
<div class="b" style="left:97.0px;top:1657.1px;width:1430.0px;height:199.7px;border-radius:10px;background:#111827;"></div>
<div id="c2_0" class="t m" style="left:118.5px;top:1685.5px;font-size:19px;color:#f3f4f6;font-weight:400;letter-spacing:0.000px;"><span class="cb"><span style="color:#f3f4f6">$</span> <span style="color:#c4e74e">echo 'shell hello'</span></span></div>
<div id="c2_1" class="t m" style="left:118.5px;top:1717.4px;font-size:19px;color:#f3f4f6;font-weight:400;letter-spacing:0.000px;"><span class="cb"><span style="color:#f3f4f6">shell hello</span></span></div>
<div id="c2_2" class="t m" style="left:118.5px;top:1749.0px;font-size:19px;color:#f3f4f6;font-weight:400;letter-spacing:0.000px;"><span class="cb"><span style="color:#f3f4f6">$</span> <span style="color:#c4e74e">echo 'world     test'</span></span></div>
<div id="c2_3" class="t m" style="left:118.5px;top:1780.6px;font-size:19px;color:#f3f4f6;font-weight:400;letter-spacing:0.000px;"><span class="cb"><span style="color:#f3f4f6">world     </span><span style="color:#c4e74e">test</span></span></div>
<div id="c2_4" class="t m" style="left:118.5px;top:1811.8px;font-size:19px;color:#f3f4f6;font-weight:400;letter-spacing:0.000px;"><span class="cb"><span style="color:#f3f4f6">$</span></span></div>
<div id="p7" class="t s" style="left:97.5px;top:1894.6px;font-size:25.2px;color:#d1d5db;font-weight:400;letter-spacing:0.768px;">The tester will check if the</div>
<div class="b" style="left:415.0px;top:1889.6px;width:70.0px;height:35.8px;border-radius:6px;background:#111827;border:1.5px solid #262e3b;"></div><div class="t s cb" style="left:415.0px;width:70.0px;text-align:center;top:1898.1px;font-size:21px;color:#e5e7eb;font-weight:400;">echo</div>
<div id="p7b" class="t s" style="left:491.0px;top:1894.6px;font-size:25.2px;color:#d1d5db;font-weight:400;letter-spacing:1.213px;">command correctly prints the quoted text.</div>
<div id="p8" class="t s" style="left:97.5px;top:1966.5px;font-size:25.2px;color:#d1d5db;font-weight:400;letter-spacing:0.521px;">Then it will also send a</div>
<div class="b" style="left:372.2px;top:1961.5px;width:56.5px;height:35.8px;border-radius:6px;background:#111827;border:1.5px solid #262e3b;"></div><div class="t s cb" style="left:372.2px;width:56.5px;text-align:center;top:1970.0px;font-size:21px;color:#e5e7eb;font-weight:400;">cat</div>
<div id="p8b" class="t s" style="left:435.7px;top:1966.5px;font-size:25.2px;color:#d1d5db;font-weight:400;letter-spacing:1.017px;">command, with the file name parameter enclosed in single quotes:</div>
<div class="b" style="left:97.0px;top:2031.1px;width:1430.0px;height:104.2px;border-radius:10px;background:#111827;"></div>
<div id="c3_0" class="t m" style="left:118.5px;top:2059.1px;font-size:19px;color:#d1d5db;font-weight:400;letter-spacing:0.000px;"><span class="cb"><span style="color:#f3f4f6">$</span> <span style="color:#e0485f">cat</span> <span style="color:#c4e74e">'/tmp/file name' '/tmp/file name with spaces'</span></span></div>
<div id="c3_1" class="t m" style="left:118.5px;top:2090.3px;font-size:19px;color:#f3f4f6;font-weight:400;letter-spacing:0.000px;"><span class="cb">content1 content2</span></div>
<div id="p9" class="t s" style="left:97.5px;top:2174.1px;font-size:25.2px;color:#d1d5db;font-weight:400;letter-spacing:0.767px;">The tester will check if the</div>
<div class="b" style="left:415.0px;top:2169.1px;width:56.6px;height:35.8px;border-radius:6px;background:#111827;border:1.5px solid #262e3b;"></div><div class="t s cb" style="left:415.0px;width:56.6px;text-align:center;top:2177.6px;font-size:21px;color:#e5e7eb;font-weight:400;">cat</div>
<div id="p9b" class="t s" style="left:478.5px;top:2174.1px;font-size:25.2px;color:#d1d5db;font-weight:400;letter-spacing:1.154px;">command correctly prints the file content.</div>
<div id="h3" class="t s" style="left:97.0px;top:2263.8px;font-size:31.5px;color:#e5e7eb;font-weight:700;letter-spacing:0.544px;">Notes</div>
<div class="b" style="left:113.8px;top:2338.2px;width:8.4px;height:8.4px;border-radius:50%;background:#4b5563;"></div>
<div id="li4" class="t s" style="left:145.6px;top:2329.3px;font-size:25.2px;color:#d1d5db;font-weight:400;letter-spacing:-0.303px;">The</div>
<div class="b" style="left:196.0px;top:2324.3px;width:55.7px;height:35.8px;border-radius:6px;background:#111827;border:1.5px solid #262e3b;"></div><div class="t s cb" style="left:196.0px;width:55.7px;text-align:center;top:2332.8px;font-size:21px;color:#e5e7eb;font-weight:400;">cat</div>
<div id="li4b" class="t s" style="left:259.1px;top:2329.3px;font-size:25.2px;color:#d1d5db;font-weight:400;letter-spacing:0.832px;">command is an executable available on most systems, so there's no need to implement it yourself.</div>
<div class="b" style="left:97.0px;top:2400.3px;width:320.6px;height:61.3px;border-radius:7px;border:1.5px solid #1f2633;background:#0a0f1b;"></div>
<svg class="b" style="left:113px;top:2416px" width="30" height="30" viewBox="0 0 30 30"><path d="M8 9l-6 6 6 6M22 9l6 6-6 6" stroke="#14b8a6" stroke-width="3" fill="none" stroke-linecap="round" stroke-linejoin="round"/><path d="M17.5 4.5l-5 21" stroke="#14b8a6" stroke-width="3" stroke-linecap="round"/></svg>
<div id="vce" class="t s" style="left:152.0px;top:2418.3px;font-size:25px;color:#e5e7eb;font-weight:400;letter-spacing:0.696px;">View Code Examples</div>
<div class="b" style="left:60.0px;top:2535.4px;width:2417.0px;height:65.8px;border-radius:8px;border:1.5px solid #171d2a;background:#030712;"></div>
<div id="tr" class="t s" style="left:78.9px;top:2557.7px;font-size:19.6px;color:#6b7280;font-weight:700;letter-spacing:-0.924px;">TEST RUNNER:</div>
<div class="b" style="left:226.6px;top:2560.4px;width:15.8px;height:15.8px;border-radius:50%;background:#9ca3af;"></div>
<div id="rtr" class="t s" style="left:255.0px;top:2557.1px;font-size:20.3px;color:#9ca3af;font-weight:400;letter-spacing:-0.436px;">Ready to run tests...</div>
<div class="b" style="left:2246.0px;top:2548.0px;width:211.8px;height:37.4px;border-radius:6px;border:1.5px solid #1a2130;background:#030712;"></div>
<svg class="b" style="left:2258px;top:2557px" width="20" height="20" viewBox="0 0 20 20"><circle cx="10" cy="10" r="9.5" fill="#9ca3af"/><path d="M10 4.5v9M6 10l4 4 4-4" stroke="#111827" stroke-width="2.4" fill="none" stroke-linecap="round" stroke-linejoin="round"/></svg>
<div id="vi" class="t s" style="left:2285.8px;top:2556.6px;font-size:20.3px;color:#f3f4f6;font-weight:700;letter-spacing:-0.335px;">View Instructions</div>
<div id="hints" class="t s" style="left:60.3px;top:2653.9px;font-size:32px;color:#f3f4f6;font-weight:700;letter-spacing:-1.827px;">Hints</div>
<div id="fc" class="t s" style="left:2283.0px;top:2660.6px;font-size:20.3px;color:#6b7280;font-weight:400;letter-spacing:-0.557px;">Filter by C++</div>
<div class="b" style="left:2410.8px;top:2653.0px;width:65.8px;height:35.7px;border-radius:18px;background:#0d9488;"></div>
<div class="b" style="left:2444.0px;top:2656.0px;width:30.0px;height:30.0px;border-radius:50%;background:#030712;"></div>
<svg class="b" style="left:2450px;top:2662px" width="18" height="18" viewBox="0 0 18 18"><path d="M3 9.5l4 4 8-8" stroke="#14b8a6" stroke-width="3" fill="none" stroke-linecap="round" stroke-linejoin="round"/></svg>
<div class="b" style="left:60.0px;top:2703.8px;width:2417.0px;height:1.4px;background:#111722;"></div>
<svg class="b" style="left:58.7px;top:2743.6px" width="50" height="50" viewBox="0 0 50 50"><circle cx="25" cy="25" r="25" fill="#161616"/><circle cx="25" cy="25" r="24.3" fill="none" stroke="#2a2f38" stroke-width="1.4"/><path d="M12 10 L15 9 L18 15 L20 11 L27 11 L29 15 L33 19 L34 25 L31 25 L29 21 L28 26 L33 31 L35 36 L31 36 L27 31 L23 30 L22 38 L24 41 L18 41 L18 32 L16 24 L16 18z" fill="#c9c9bf"/><rect x="21" y="14" width="5" height="4" fill="#8a8a80"/><rect x="8" y="20" width="1" height="1" fill="#666"/><rect x="40" y="14" width="1" height="1" fill="#666"/><rect x="38" y="38" width="1" height="1" fill="#666"/><rect x="12" y="36" width="1" height="1" fill="#666"/><rect x="28" y="6" width="1" height="1" fill="#666"/><rect x="44" y="26" width="1" height="1" fill="#666"/><rect x="6" y="28" width="1" height="1" fill="#666"/></svg>
<div class="b" style="left:126.6px;top:2741.0px;width:2350.1px;height:346.4px;border-radius:8px;border:1.5px solid #171d2a;background:#030712;"></div>
<div class="b" style="left:128.0px;top:2742.5px;width:2347.2px;height:57.5px;border-radius:7px 7px 0 0;background:#0a0f1b;"></div>
<div class="b" style="left:126.6px;top:2799.8px;width:2350.1px;height:1.5px;background:#1a2130;"></div>
<div class="b" style="left:126.6px;top:2741.0px;width:106.0px;height:60.3px;border-radius:8px 0 0 0;background:#030712;border:1.5px solid #171d2a;border-bottom:none;"></div>
<div id="wr" class="t s" style="left:151.0px;top:2759.5px;font-size:23px;color:#e5e7eb;font-weight:400;letter-spacing:0.688px;">Write</div>
<div id="pv" class="t s" style="left:258.0px;top:2759.5px;font-size:23px;color:#c4c8cf;font-weight:400;letter-spacing:0.166px;">Preview</div>
<div class="b" style="left:139.0px;top:2813.7px;width:2324.9px;height:194.8px;border-radius:6px;border:1.5px solid #1a2130;background:#030712;"></div>
<div id="ph" class="t s" style="left:152.0px;top:2831.5px;font-size:23px;color:#6b7280;font-weight:400;letter-spacing:0.444px;">Found an interesting resource? Share it with the community.</div>
<svg class="b" style="left:2452px;top:2995px" width="10" height="10" viewBox="0 0 10 10"><path d="M9 1L1 9M9 5L5 9" stroke="#9ca3af" stroke-width="1.5"/></svg>
<svg class="b" style="left:139px;top:3040.5px" width="30" height="19" viewBox="0 0 30 19"><rect x="0.75" y="0.75" width="28.5" height="17.5" rx="1.5" fill="none" stroke="#4b5563" stroke-width="1.5"/><path d="M5 14V5l4 4.5L13 5v9" stroke="#4b5563" stroke-width="2.2" fill="none"/><path d="M20.5 5v8M17 10l3.5 3.5L24 10" stroke="#4b5563" stroke-width="2.2" fill="none"/></svg>
<div id="md" class="t s" style="left:175.2px;top:3039.6px;font-size:20px;color:#4b5563;font-weight:400;letter-spacing:0.359px;">Markdown supported.</div>
<div class="b" style="left:2329.0px;top:3025.0px;width:134.9px;height:49.2px;border-radius:6px;background:#092a2c;"></div>
<div id="cm" class="t s" style="left:2342.3px;top:3038.4px;font-size:22.4px;color:#6b7f80;font-weight:700;letter-spacing:0.691px;">Comment</div>
</div></body></html>
